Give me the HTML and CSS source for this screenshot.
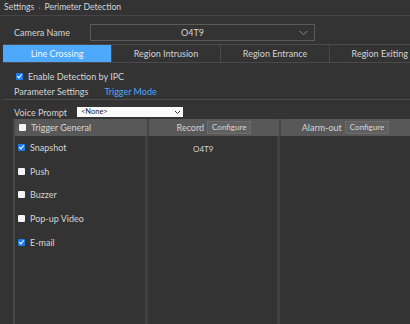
FILE: index.html
```html
<!DOCTYPE html>
<html>
<head>
<meta charset="utf-8">
<link rel="stylesheet" href="styles.css">
</head>
<body>
<div class="page">
  <div class="crumb">Settings <span class="sep">›</span> Perimeter Detection</div>
  <div class="camrow">
    <span class="camlabel">Camera Name</span>
    <div class="camselect">
      <span class="camvalue">O4T9</span>
      <svg class="chev" width="9" height="6" viewBox="0 0 9 6"><path d="M0.5 0.8 L4.5 4.8 L8.5 0.8" fill="none" stroke="#8a8a8a" stroke-width="1"/></svg>
    </div>
  </div>
  <div class="tabs">
    <div class="tab active">Line Crossing</div>
    <div class="tab">Region Intrusion</div>
    <div class="tab">Region Entrance</div>
    <div class="tab last">Region Exiting</div>
  </div>
  <div class="enable"><span class="cb checked"></span>Enable Detection by IPC</div>
  <div class="subtabs">
    <span class="subtab">Parameter Settings</span>
    <span class="subtab on">Trigger Mode</span>
  </div>
  <div class="voice">
    <span class="vlabel">Voice Prompt</span>
    <div class="vselect"><span>&lt;None&gt;</span>
      <svg width="7" height="5" viewBox="0 0 7 5"><path d="M1 1 L3.5 3.5 L6 1" fill="none" stroke="#333" stroke-width="1"/></svg>
    </div>
  </div>
  <div class="table">
    <div class="thead">
      <div class="th c1"><span class="cb"></span>Trigger General</div>
      <div class="th c2">Record <span class="btn">Configure</span></div>
      <div class="th c3">Alarm-out <span class="btn">Configure</span></div>
    </div>
    <div class="tbody">
      <div class="td c1">
        <div class="item"><span class="cb checked"></span>Snapshot</div>
        <div class="item"><span class="cb"></span>Push</div>
        <div class="item"><span class="cb"></span>Buzzer</div>
        <div class="item"><span class="cb"></span>Pop-up Video</div>
        <div class="item"><span class="cb checked"></span>E-mail</div>
      </div>
      <div class="td c2"><div class="rec">O4T9</div></div>
      <div class="td c3"></div>
    </div>
  </div>
</div>
</body>
</html>
```
FILE: styles.css
```css
html, body {
  margin: 0;
  padding: 0;
  background: #333333;
}
.page {
  width: 410px;
  height: 324px;
  overflow: hidden;
  font-family: "Lato", "Noto Sans", sans-serif;
  font-size: 9px;
  color: #d4d4d4;
}
.crumb {
  height: 15px;
  line-height: 14px;
  padding-left: 4px;
  border-bottom: 1px solid #454545;
  font-size: 8.6px;
}
.sep {
  color: #888;
  font-size: 7px;
  margin: 0 2px;
}
.camrow {
  display: flex;
  align-items: center;
  height: 16px;
  margin-top: 8px;
}
.camlabel {
  width: 76px;
  padding-left: 14px;
}
.camselect {
  box-sizing: border-box;
  width: 225px;
  height: 17px;
  border: 1px solid #5a5a5a;
  display: flex;
  align-items: center;
  justify-content: center;
  padding-right: 20px;
  position: relative;
}
.chev {
  position: absolute;
  right: 6px;
  top: 5px;
}
.tabs {
  display: flex;
  margin-top: 4px;
  margin-left: 3px;
  height: 17px;
  border-top: 1px solid #4a4a4a;
  border-bottom: 1px solid #4a4a4a;
  white-space: nowrap;
}
.tab {
  flex: 0 0 108px;
  text-align: center;
  line-height: 17px;
  border-left: 1px solid #4a4a4a;
}
.tab:first-child {
  border-left: none;
}
.tab.last {
  flex: 1 1 auto;
  text-align: right;
  padding-right: 2px;
}
.tab.active {
  background: #4ea8fb;
  color: #f4f8ff;
}
.enable {
  display: flex;
  align-items: center;
  margin-top: 7px;
  padding-left: 16px;
  height: 12px;
}
.cb {
  display: inline-block;
  width: 7px;
  height: 7px;
  background: #f4f4f4;
  border-radius: 1px;
  margin-right: 5px;
  position: relative;
  flex: none;
}
.cb.checked {
  background: #1e7cf0;
}
.cb.checked::after {
  content: "";
  position: absolute;
  left: 2px;
  top: 0px;
  width: 2px;
  height: 4px;
  border-right: 1px solid #fff;
  border-bottom: 1px solid #fff;
  transform: rotate(40deg);
}
.subtabs {
  display: flex;
  gap: 16px;
  margin-top: 2px;
  height: 15px;
  line-height: 15px;
  border-bottom: 1px solid #4a4a4a;
  margin-left: 3px;
  padding-left: 11px;
}
.subtab.on {
  color: #4ea8fb;
}
.voice {
  display: flex;
  align-items: center;
  margin-top: 6px;
  height: 12px;
}
.vlabel {
  width: 63px;
  padding-left: 14px;
}
.vselect {
  width: 100px;
  height: 10px;
  background: #fafafa;
  color: #222;
  font-size: 7.5px;
  line-height: 10px;
  display: flex;
  justify-content: space-between;
  align-items: center;
  padding: 0 2px 0 4px;
}
.table {
  margin-top: 1px;
  margin-left: 13px;
  border-left: 2px solid #474747;
}
.thead {
  display: flex;
  height: 17px;
  background: #585858;
}
.th {
  display: flex;
  align-items: center;
}
.c1 {
  width: 128px;
  padding-left: 4px;
}
.c2 {
  width: 130px;
  border-left: 2px solid #444;
}
.c3 {
  flex: 1;
  border-left: 2px solid #444;
}
.th.c2, .th.c3 {
  justify-content: center;
}
.btn {
  display: inline-block;
  margin-left: 3px;
  padding: 0 4px;
  height: 11px;
  line-height: 11px;
  background: #606060;
  border: 1px solid #6c6c6c;
  font-size: 8px;
  color: #d8d8d8;
}
.tbody {
  display: flex;
  height: 190px;
}
.td.c2, .td.c3 {
  border-left: 3px solid #404040;
}
.td.c1 {
  padding-top: 0px;
  padding-left: 3px;
  width: 127px;
}
.td.c2 {
  width: 129px;
}
.item {
  display: flex;
  align-items: center;
  height: 23.6px;
}
.rec {
  margin-top: 8px;
  padding-left: 45px;
  font-size: 8px;
}
```
